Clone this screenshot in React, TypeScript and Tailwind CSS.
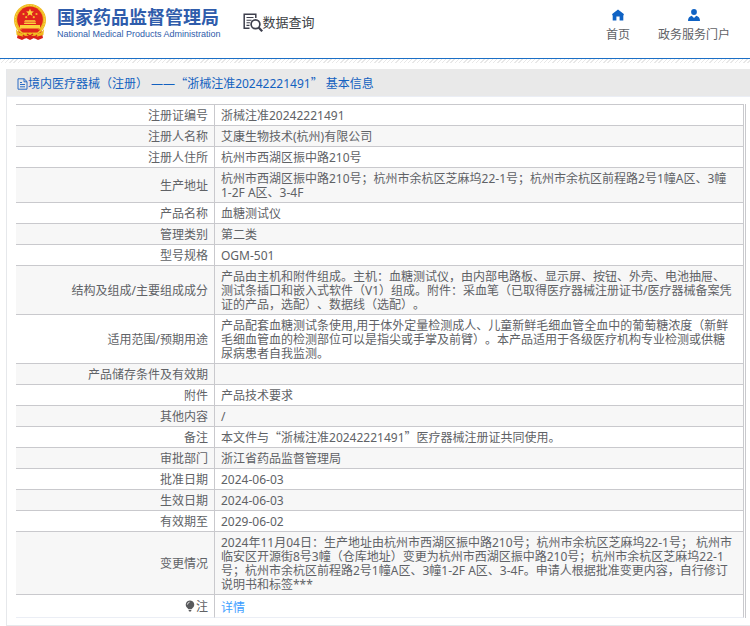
import type { ReactNode } from "react";

function Prose({ text }: { text: string }) {
  return (
    <>
      {text.split(/([“”])/).map((part, i) =>
        part === "“" || part === "”" ? (
          <span key={i} className="font-['Noto_Sans_CJK_SC',sans-serif] leading-[0]">
            {part}
          </span>
        ) : (
          part
        ),
      )}
    </>
  );
}

function Emblem() {
  return (
    <svg viewBox="0 0 34 36" className="h-9 w-[34px] shrink-0" aria-hidden="true">
      <path d="M6 24 L28 24 L30 34 L25 36 L21 34 L17 36 L13 34 L9 36 L4 34 Z" fill="#d9201c" />
      <circle cx="17" cy="16" r="16" fill="#f0b91e" />
      <circle cx="17" cy="16" r="14.7" fill="none" stroke="#f9d54a" strokeWidth="1" strokeDasharray="2 1" />
      <circle cx="17" cy="15.5" r="12.9" fill="#e0241d" />
      <path d="M17 4.6l1.1 2.6 2.8.2-2.1 1.8.7 2.8-2.5-1.5-2.5 1.5.7-2.8-2.1-1.8 2.8-.2z" fill="#fbd23c" />
      <g fill="#f6b92c">
        <circle cx="10.5" cy="10" r="1.1" />
        <circle cx="23.5" cy="10" r="1.1" />
        <circle cx="13.2" cy="13.2" r="1.1" />
        <circle cx="20.8" cy="13.2" r="1.1" />
      </g>
      <path d="M12 16.2h10l1 1.6H11zM11.6 18.4h10.8l.8 1.6H10.8zM7 21h20v3.6H7z" fill="#fbd23c" />
      <path d="M6.5 25.6h21l-3 3h-15z" fill="#e0241d" />
      <path d="M3 25c3 5 8 6 14 3.6C23 31 28 30 31 25l-.6 6-6 1.6-7.4-1.8-7.4 1.8-6-1.6z" fill="#f0b91e" />
      <path d="M10 31l3 3M24 31l-3 3M14 30l3 2 3-2" stroke="#d9201c" strokeWidth="1.4" fill="none" />
    </svg>
  );
}

function QueryIcon() {
  return (
    <svg viewBox="0 0 20 20" className="size-5" fill="none" stroke="#3d3f4c" aria-hidden="true">
      <path d="M6.5 16.3H1.2V2.2h11.6V6" strokeWidth="1.5" />
      <path d="M3.5 5.5h7M3.5 8.2h5M3.5 10.8h3.4M3.5 13.4h3" strokeWidth="1.1" />
      <circle cx="12.5" cy="12.3" r="4.4" strokeWidth="1.7" />
      <path d="M15.6 15.500l3.600 3.800" strokeWidth="2.2" />
    </svg>
  );
}

function HomeIcon() {
  return (
    <svg viewBox="0 0 12 12" className="size-3" fill="#0f62c4" aria-hidden="true">
      <path d="M6 .6L11.8 5v1.2H11.3V11.6H7.6V7.6H4.4v4H.7V6.2H.2V5z" />
    </svg>
  );
}

function UserIcon() {
  return (
    <svg viewBox="0 0 12 12" className="size-3" fill="#0f62c4" aria-hidden="true">
      <circle cx="6" cy="3" r="2.9" />
      <path d="M0 12c0-3 1.300-4.600 3.700-5.200L6 9l2.300-2.200C10.700 7.400 12 9 12 12z" />
    </svg>
  );
}

function DocIcon() {
  return (
    <svg viewBox="0 0 11 12" className="h-3 w-[11px] shrink-0" fill="none" stroke="#2a6bc4" aria-hidden="true">
      <path d="M1 .8h6.200L10 3.600v7.600H1zM7 .8v3h3M3 4.500h2M3 6.500h5M3 8.800h5" />
    </svg>
  );
}

function BulbIcon() {
  return (
    <svg viewBox="0 0 10 12" className="mr-px inline-block h-3 w-[10px] align-[-1px]" fill="#58595c" aria-hidden="true">
      <path d="M5 .5a4.200 4.200 0 0 1 2.600 7.500L6.500 9.300h-3L2.400 8A4.200 4.200 0 0 1 5 .5z" />
      <path d="M3.700 9.900h2.600v1L5 11.700l-1.300-.8z" />
      <path d="M2.400 4.600A2.600 2.600 0 0 1 4.600 2.200" fill="none" stroke="#fff" strokeWidth=".8" />
    </svg>
  );
}

function Row({ label, children }: { label: ReactNode; children?: ReactNode }) {
  return (
    <tr className="group even:bg-[#f7f7f7]">
      <th
        scope="row"
        className="border-t border-r border-[#c9c9cd] pt-1 pr-[6px] pb-[2px] pl-2 text-right font-normal group-last:border-b group-last:border-b-[#ebeef5] group-last:leading-4"
      >
        {label}
      </th>
      <td className="border-t border-r border-[#c9c9cd] pt-1 pr-2 pb-[2px] pl-[6px] group-last:border-b group-last:border-b-[#ebeef5] group-last:pt-[5px] group-last:pb-px group-last:leading-4">
        {children}
      </td>
    </tr>
  );
}

const rows: { label: string; value: string }[] = [
  { label: "注册证编号", value: "浙械注准20242221491" },
  { label: "注册人名称", value: "艾康生物技术(杭州)有限公司" },
  { label: "注册人住所", value: "杭州市西湖区振中路210号" },
  {
    label: "生产地址",
    value: "杭州市西湖区振中路210号；杭州市余杭区芝麻坞22-1号；杭州市余杭区前程路2号1幢A区、3幢1-2F A区、3-4F",
  },
  { label: "产品名称", value: "血糖测试仪" },
  { label: "管理类别", value: "第二类" },
  { label: "型号规格", value: "OGM-501" },
  {
    label: "结构及组成/主要组成成分",
    value:
      "产品由主机和附件组成。主机：血糖测试仪，由内部电路板、显示屏、按钮、外壳、电池抽屉、测试条插口和嵌入式软件（V1）组成。附件：采血笔（已取得医疗器械注册证书/医疗器械备案凭证的产品，选配）、数据线（选配）。",
  },
  {
    label: "适用范围/预期用途",
    value:
      "产品配套血糖测试条使用,用于体外定量检测成人、儿童新鲜毛细血管全血中的葡萄糖浓度（新鲜毛细血管血的检测部位可以是指尖或手掌及前臂）。本产品适用于各级医疗机构专业检测或供糖尿病患者自我监测。",
  },
  { label: "产品储存条件及有效期", value: "" },
  { label: "附件", value: "产品技术要求" },
  { label: "其他内容", value: "/" },
  { label: "备注", value: "本文件与“浙械注准20242221491”医疗器械注册证共同使用。" },
  { label: "审批部门", value: "浙江省药品监督管理局" },
  { label: "批准日期", value: "2024-06-03" },
  { label: "生效日期", value: "2024-06-03" },
  { label: "有效期至", value: "2029-06-02" },
  {
    label: "变更情况",
    value:
      "2024年11月04日：生产地址由杭州市西湖区振中路210号；杭州市余杭区芝麻坞22-1号； 杭州市临安区开源街8号3幢（仓库地址）变更为杭州市西湖区振中路210号；杭州市余杭区芝麻坞22-1号；杭州市余杭区前程路2号1幢A区、3幢1-2F A区、3-4F。申请人根据批准变更内容，自行修订说明书和标签***",
  },
];

export default function App() {
  return (
    <div
      lang="zh-CN"
      className="bg-white pb-px font-['Noto_Sans','Noto_Sans_CJK_SC',sans-serif] text-xs leading-[14px] text-[#606266] [text-spacing-trim:space-all]"
    >
      <header className="flex h-[59px] items-start border-b border-[#1b6fc6] pr-5 pl-[13px]">
        <a href="#home" className="flex gap-[10px] pt-1">
          <Emblem />
          <span className="flex flex-col whitespace-nowrap text-[#2f5cab]">
            <span className="font-['Noto_Sans_CJK_SC',sans-serif] text-[18px] leading-6 font-bold">
              国家药品监督管理局
            </span>
            <span className="font-['Liberation_Sans',sans-serif] text-[9px] leading-3">
              National Medical Products Administration
            </span>
          </span>
        </a>
        <a
          href="#query"
          className="ml-[22px] flex items-center pt-3 font-['Noto_Sans_CJK_SC',sans-serif] text-[13px] leading-5 whitespace-nowrap text-[#3d3f45]"
        >
          <QueryIcon />
          数据查询
        </a>
        <nav className="ml-auto flex gap-7 pt-[9px]">
          <a href="#index" className="flex flex-col items-center gap-[7px] whitespace-nowrap">
            <HomeIcon />
            首页
          </a>
          <a href="#portal" className="flex flex-col items-center gap-[7px] whitespace-nowrap">
            <UserIcon />
            政务服务门户
          </a>
        </nav>
      </header>
      <div className="h-1 bg-[repeating-linear-gradient(135deg,#e8e8e8_0px,#e8e8e8_1px,#ffffff_1px,#ffffff_3px)]" />

      <main className="mt-[6px] ml-[6px] border-b border-l border-[#e6e8eb]">
        <h1 className="flex h-7 items-center border-b border-[#ebeef5] bg-[#e9e9e9] pt-[2px] pl-[10px] leading-4 text-[#1361c0]">
          <DocIcon />
          <span className="whitespace-pre">
            <Prose text="境内医疗器械（注册） ——“浙械注准20242221491” 基本信息" />
          </span>
        </h1>
        <div className="mt-[7px] mr-1 mb-[7px] ml-[9px] border-r border-[#c9c9cd] pr-px">
          <table className="w-full table-fixed border-separate border-spacing-0">
            <colgroup>
              <col className="w-[199px]" />
              <col />
            </colgroup>
            <tbody>
              {rows.map((row) => (
                <Row key={row.label} label={row.label}>
                  <Prose text={row.value} />
                </Row>
              ))}
              <Row
                label={
                  <>
                    <BulbIcon />注
                  </>
                }
              >
                <a href="#detail" className="text-[#409eff]">
                  详情
                </a>
              </Row>
            </tbody>
          </table>
        </div>
      </main>
    </div>
  );
}
